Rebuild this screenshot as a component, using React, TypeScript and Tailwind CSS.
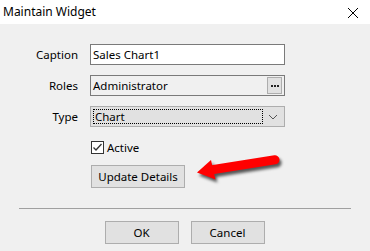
import { useState } from 'react';

const font = { fontFamily: '"Noto Sans", "Liberation Sans", sans-serif' };

function Row({ label, children }: { label: string; children: React.ReactNode }) {
  return (
    <div className="flex items-center h-[21px]">
      <div className="w-[59px] text-right pr-[1px]">{label}</div>
      <div className="ml-[11px] w-[195px] h-full">{children}</div>
    </div>
  );
}

export default function App() {
  const [caption, setCaption] = useState('Sales Chart1');
  const [active, setActive] = useState(true);

  return (
    <div
      className="relative w-[370px] h-[251px] bg-[#f0f0f0] text-[11.5px] leading-none text-black overflow-hidden"
      style={font}
    >
      {/* title bar */}
      <div className="h-[24px] bg-white flex items-center justify-between pl-[3px] pr-[6px]">
        <span className="text-[12px] pb-[1px]">Maintain Widget</span>
        <svg width="22" height="22" viewBox="0 0 22 22" className="mt-[1px]">
          <path d="M6 6 L16 16 M16 6 L6 16" stroke="#000" strokeWidth="1" />
        </svg>
      </div>

      <div className="pt-[20px] pl-[20px] flex flex-col gap-[10px]">
        <Row label="Caption">
          <input
            value={caption}
            onChange={(e) => setCaption(e.target.value)}
            className="w-full h-full bg-white border border-[#7a7a7a] px-[2px] outline-none text-[11.5px]"
            style={font}
          />
        </Row>
        <Row label="Roles">
          <div className="w-full h-full bg-[#f0f0f0] border border-[#7a7a7a] flex items-center justify-between pl-[2px] pr-[2px]">
            <span>Administrator</span>
            <div className="w-[15px] h-[17px] bg-[#e1e1e1] border border-[#adadad] flex items-center justify-center gap-[1px]">
              <span className="w-[2px] h-[2px] bg-[#222]" />
              <span className="w-[2px] h-[2px] bg-[#222]" />
              <span className="w-[2px] h-[2px] bg-[#222]" />
            </div>
          </div>
        </Row>
        <Row label="Type">
          <div className="w-full h-full bg-[#e1e1e1] border border-[#adadad] flex items-center p-[2px]">
            <div className="flex-1 h-full border border-dotted border-black flex items-center pl-[1px]">
              Chart
            </div>
            <svg width="18" height="12" viewBox="0 0 18 12" className="ml-[1px]">
              <path d="M5 4 L9 8 L13 4" stroke="#555" strokeWidth="1" fill="none" />
            </svg>
          </div>
        </Row>
      </div>

      <div className="pl-[91px] mt-[14px] flex flex-col items-start">
        <label className="flex items-center h-[13px] gap-[3px] cursor-default">
          <span
            onClick={() => setActive(!active)}
            className="w-[13px] h-[13px] bg-white border border-[#333] flex items-center justify-center"
          >
            {active && (
              <svg width="11" height="11" viewBox="0 0 11 11">
                <path d="M1.5 5.5 L4 8 L9.5 2" stroke="#333" strokeWidth="1.3" fill="none" />
              </svg>
            )}
          </span>
          <span>Active</span>
        </label>
        <button
          className="mt-[11px] w-[94px] h-[23px] bg-[#e1e1e1] border border-[#adadad] text-[11.5px]"
          style={font}
        >
          Update Details
        </button>
      </div>

      <div className="mx-[19px] mt-[20px] border-t border-[#a0a0a0]" />

      <div className="mt-[12px] flex justify-center gap-[12px] pr-[1px]">
        <button className="w-[74px] h-[23px] bg-[#e1e1e1] border border-[#adadad] text-[11.5px]" style={font}>
          OK
        </button>
        <button className="w-[74px] h-[23px] bg-[#e1e1e1] border border-[#adadad] text-[11.5px]" style={font}>
          Cancel
        </button>
      </div>

      {/* callout arrow */}
      <svg
        width="100"
        height="40"
        viewBox="0 0 100 40"
        className="absolute left-[190px] top-[150px] drop-shadow-[2px_3px_1.5px_rgba(0,0,0,0.65)]"
      >
        <line x1="85" y1="9.8" x2="22" y2="19.8" stroke="#ff0000" strokeWidth="9" strokeLinecap="round" />
        <polygon points="7,22.5 21,10 25.5,29.5" fill="#ff0000" />
      </svg>
    </div>
  );
}
